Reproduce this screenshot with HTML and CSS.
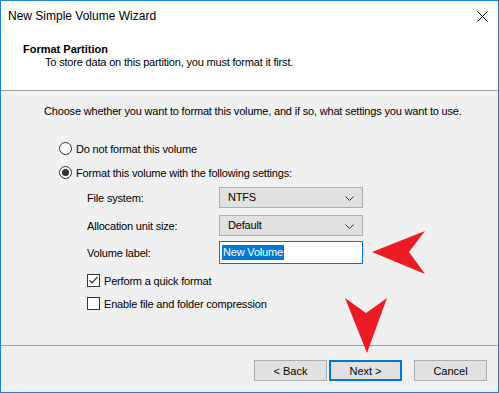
FILE: index.html
```html
<!DOCTYPE html>
<html lang="en">
<head>
  <meta charset="UTF-8">
  <title>New Simple Volume Wizard</title>
  <link rel="stylesheet" href="styles.css">
</head>
<body>
  <div class="window">
    <div class="titlebar">
      <span class="title">New Simple Volume Wizard</span>
      <svg class="close" width="11" height="11" viewBox="0 0 11 11">
        <path d="M0.5 0.5 L10.5 10.5 M10.5 0.5 L0.5 10.5" stroke="#000" stroke-width="1" fill="none"/>
      </svg>
    </div>

    <div class="header">
      <div class="heading">Format Partition</div>
      <div class="subheading">To store data on this partition, you must format it first.</div>
    </div>

    <div class="content">
      <p class="intro">Choose whether you want to format this volume, and if so, what settings you want to use.</p>

      <div class="option">
        <span class="radio"></span>
        <span>Do not format this volume</span>
      </div>
      <div class="option second">
        <span class="radio checked"></span>
        <span>Format this volume with the following settings:</span>
      </div>

      <div class="settings">
        <div class="setting">
          <span class="label">File system:</span>
          <div class="combo">NTFS
            <svg class="chev" width="9" height="5" viewBox="0 0 9 5"><path d="M0.5 0.5 L4.5 4.5 L8.5 0.5" stroke="#333" fill="none"/></svg>
          </div>
        </div>
        <div class="setting">
          <span class="label">Allocation unit size:</span>
          <div class="combo">Default
            <svg class="chev" width="9" height="5" viewBox="0 0 9 5"><path d="M0.5 0.5 L4.5 4.5 L8.5 0.5" stroke="#333" fill="none"/></svg>
          </div>
        </div>
        <div class="setting volume">
          <span class="label">Volume label:</span>
          <div class="textbox"><span class="selected">New Volume</span></div>
        </div>

        <div class="check">
          <span class="box">
            <svg width="11" height="11" viewBox="0 0 11 11"><path d="M1.5 5.5 L4 8 L9.5 2" stroke="#333" stroke-width="1.2" fill="none"/></svg>
          </span>
          <span>Perform a quick format</span>
        </div>
        <div class="check">
          <span class="box"></span>
          <span>Enable file and folder compression</span>
        </div>
      </div>
    </div>

    <div class="footer">
      <button class="btn">&lt; Back</button>
      <button class="btn default">Next &gt;</button>
      <button class="btn cancel">Cancel</button>
    </div>

    <svg class="arrow-left" width="56" height="44" viewBox="0 0 56 44">
      <polygon points="1,21 54,0 38,21 54,43" fill="#ed1c24"/>
    </svg>
    <svg class="arrow-down" width="44" height="56" viewBox="0 0 44 56">
      <polygon points="0,0 21,15 42,0 22,55" fill="#ed1c24"/>
    </svg>
  </div>
</body>
</html>
```

FILE: styles.css
```css
body {
  margin: 0;
  font-family: "Liberation Sans", Arial, sans-serif;
  font-size: 11px;
  letter-spacing: -0.18px;
  color: #000;
}
.window {
  position: relative;
  width: 497px;
  height: 391px;
  border: 1px solid #1883d7;
  background: #f0f0f0;
  display: flex;
  flex-direction: column;
}
.titlebar {
  height: 30px;
  flex-shrink: 0;
  background: #fff;
  display: flex;
  align-items: center;
  justify-content: space-between;
  padding: 0 10px 0 7px;
}
.title {
  font-size: 12px;
  letter-spacing: 0;
}
.header {
  height: 59px;
  flex-shrink: 0;
  background: #fff;
  border-bottom: 1px solid #a0a0a0;
  padding-left: 22px;
}
.heading {
  font-weight: bold;
  letter-spacing: 0;
  margin-top: 12px;
  line-height: 13px;
}
.subheading {
  padding-left: 22px;
  line-height: 13px;
}
.content {
  flex: 1;
  padding-left: 43px;
  border-bottom: 1px solid #a0a0a0;
}
.intro {
  margin: 14px 0 0;
  line-height: 13px;
}
.option {
  display: flex;
  align-items: center;
  height: 13px;
  margin-top: 24px;
  margin-left: 15px;
  gap: 4px;
}
.option.second {
  margin-top: 11px;
}
.radio {
  width: 11px;
  height: 11px;
  border: 1px solid #333;
  border-radius: 50%;
  background: #fff;
  position: relative;
}
.radio.checked::after {
  content: "";
  position: absolute;
  left: 2px;
  top: 2px;
  width: 7px;
  height: 7px;
  border-radius: 50%;
  background: #333;
}
.settings {
  margin-left: 43px;
  margin-top: 8px;
}
.setting {
  display: flex;
  align-items: center;
  margin-top: 7px;
}
.setting:first-child {
  margin-top: 0;
}
.setting.volume {
  margin-top: 5px;
}
.label {
  width: 132px;
}
.combo {
  width: 134px;
  height: 19px;
  line-height: 19px;
  padding-left: 8px;
  background: #e1e1e1;
  border: 1px solid #adadad;
  position: relative;
}
.chev {
  position: absolute;
  right: 8px;
  top: 8px;
}
.textbox {
  width: 140px;
  height: 21px;
  line-height: 21px;
  padding-left: 2px;
  background: #fff;
  border: 1px solid #0078d7;
}
.selected {
  background: #0078d7;
  color: #fff;
  padding: 1px 1px 2px;
}
.check {
  display: flex;
  align-items: center;
  gap: 4px;
  height: 13px;
  margin-top: 10px;
}
.box {
  width: 11px;
  height: 11px;
  border: 1px solid #333;
  background: #fff;
  display: flex;
}
.footer {
  height: 46px;
  box-sizing: border-box;
  flex-shrink: 0;
  display: flex;
  align-items: flex-start;
  padding: 14px 0 0 253px;
}
.btn {
  width: 73px;
  height: 21px;
  font-family: "Liberation Sans", Arial, sans-serif;
  font-size: 11px;
  background: #e1e1e1;
  border: 1px solid #adadad;
  padding: 0;
  color: #000;
}
.btn.default {
  margin-left: 2px;
  border: 2px solid #0078d7;
}
.btn.cancel {
  margin-left: 12px;
}
.arrow-left {
  position: absolute;
  left: 370px;
  top: 230px;
}
.arrow-down {
  position: absolute;
  left: 344px;
  top: 297px;
}
```
